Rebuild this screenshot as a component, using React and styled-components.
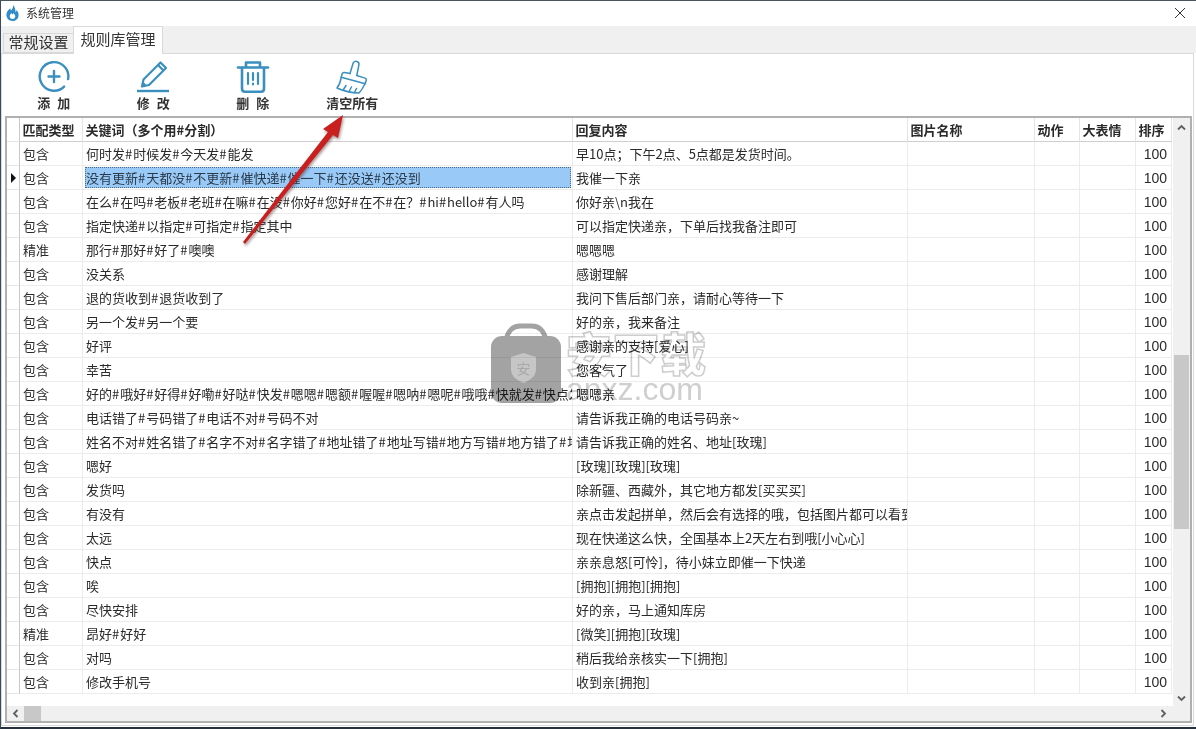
import React from "react";
import styled, { createGlobalStyle } from "styled-components";

const COLUMNS = "13px 63px 490px 335px 127px 45px 56px 36px";
const ICON_BLUE = "#3a8fbf";

const rows = [
  ["包含", "何时发#时候发#今天发#能发", "早10点；下午2点、5点都是发货时间。"],
  ["包含", "没有更新#天都没#不更新#催快递#催一下#还没送#还没到", "我催一下亲"],
  ["包含", "在么#在吗#老板#老班#在嘛#在没#你好#您好#在不#在？#hi#hello#有人吗", "你好亲\\n我在"],
  ["包含", "指定快递#以指定#可指定#指定其中", "可以指定快递亲，下单后找我备注即可"],
  ["精准", "那行#那好#好了#噢噢", "嗯嗯嗯"],
  ["包含", "没关系", "感谢理解"],
  ["包含", "退的货收到#退货收到了", "我问下售后部门亲，请耐心等待一下"],
  ["包含", "另一个发#另一个要", "好的亲，我来备注"],
  ["包含", "好评", "感谢亲的支持[爱心]"],
  ["包含", "幸苦", "您客气了"],
  ["包含", "好的#哦好#好得#好嘞#好哒#快发#嗯嗯#嗯额#喔喔#嗯呐#嗯呢#哦哦#快就发#快点发#快点发货", "嗯嗯亲"],
  ["包含", "电话错了#号码错了#电话不对#号码不对", "请告诉我正确的电话号码亲~"],
  ["包含", "姓名不对#姓名错了#名字不对#名字错了#地址错了#地址写错#地方写错#地方错了#地址不对", "请告诉我正确的姓名、地址[玫瑰]"],
  ["包含", "嗯好", "[玫瑰][玫瑰][玫瑰]"],
  ["包含", "发货吗", "除新疆、西藏外，其它地方都发[买买买]"],
  ["包含", "有没有", "亲点击发起拼单，然后会有选择的哦，包括图片都可以看到"],
  ["包含", "太远", "现在快递这么快，全国基本上2天左右到哦[小心心]"],
  ["包含", "快点", "亲亲息怒[可怜]，待小妹立即催一下快递"],
  ["包含", "唉", "[拥抱][拥抱][拥抱]"],
  ["包含", "尽快安排", "好的亲，马上通知库房"],
  ["精准", "昂好#好好", "[微笑][拥抱][玫瑰]"],
  ["包含", "对吗", "稍后我给亲核实一下[拥抱]"],
  ["包含", "修改手机号", "收到亲[拥抱]"],
];

const headers = ["匹配类型", "关键词（多个用#分割）", "回复内容", "图片名称", "动作", "大表情", "排序"];

const GlobalStyle = createGlobalStyle`
  html, body {
    margin: 0;
    padding: 0;
    background: #fff;
  }
  * {
    box-sizing: border-box;
  }
`;

const Frame = styled.div`
  position: relative;
  width: 1196px;
  height: 729px;
  display: flex;
  flex-direction: column;
  overflow: hidden;
  background: #fff;
  border-top: 1px solid #4a5560;
  border-left: 1px solid #3c4a5a;
  border-bottom: 2px solid #26303c;
  font-family: "Noto Sans CJK SC", "Liberation Sans", sans-serif;
  color: #2a2a2a;
`;

const TitleBar = styled.div`
  height: 25px;
  flex: none;
  display: flex;
  align-items: center;
  padding: 0 10px 2px 5px;
  gap: 7px;
  font-size: 12px;
  color: #333;
`;

const TitleText = styled.span`
  flex: 1;
`;

const CloseIcon = styled.svg`
  width: 10px;
  height: 10px;
  margin-right: 1px;
`;

const TabStrip = styled.div`
  height: 27px;
  flex: none;
  display: flex;
  align-items: flex-end;
  padding-left: 2px;
  background: #f0f0f0;
`;

const Tab = styled.div`
  height: ${(p) => (p.$active ? "28px" : "20px")};
  width: ${(p) => (p.$active ? "90px" : "70px")};
  margin-bottom: ${(p) => (p.$active ? "-1px" : "0")};
  padding-bottom: ${(p) => (p.$active ? "5px" : "4px")};
  position: relative;
  display: flex;
  align-items: center;
  justify-content: center;
  font-size: 15px;
  color: #333;
  background: ${(p) => (p.$active ? "#fff" : "#f0f0f0")};
  border: 1px solid #d9d9d9;
  border-bottom: ${(p) => (p.$active ? "none" : "1px solid #d9d9d9")};
  border-right: ${(p) => (p.$active ? "1px solid #d9d9d9" : "none")};
`;

const Panel = styled.div`
  flex: 1;
  min-height: 0;
  display: flex;
  flex-direction: column;
  margin: 0 2px 1px 0;
  padding: 0 1px 2px 3px;
  background: #fff;
  border: 1px solid #d9d9d9;
`;

const Toolbar = styled.div`
  height: 62px;
  flex: none;
  display: flex;
  margin-left: -1px;
`;

const ToolButton = styled.div`
  width: 99.5px;
  display: flex;
  flex-direction: column;
  align-items: center;
  padding-top: 6px;
`;

const ToolIcon = styled.svg`
  width: 34px;
  height: 34px;
  display: block;
  fill: none;
  stroke: ${ICON_BLUE};
`;

const ToolLabel = styled.span`
  margin-top: 1px;
  font-size: 13px;
  line-height: 17px;
  font-weight: 700;
  white-space: pre;
  color: #333;
  font-family: "Liberation Sans", "Noto Sans CJK SC", sans-serif;
`;

const Table = styled.div`
  flex: 1;
  min-height: 0;
  display: flex;
  flex-direction: column;
  border: 2px solid #b0b0b0;
`;

const TableBody = styled.div`
  flex: 1;
  min-height: 0;
  display: flex;
`;

const GridArea = styled.div`
  flex: 1;
  min-width: 0;
`;

const Row = styled.div`
  display: grid;
  grid-template-columns: ${COLUMNS};
  height: 24px;
`;

const HeaderCell = styled.div`
  display: flex;
  align-items: center;
  padding: 0 0 1px 2.5px;
  font-size: 13px;
  font-weight: 700;
  white-space: nowrap;
  overflow: hidden;
  background: #fff;
  border-right: 1px solid #e4e4e4;
  border-bottom: 1px solid #cfcfcf;
`;

const RowHead = styled.div`
  display: flex;
  align-items: center;
  justify-content: center;
  background: #fff;
  border-right: 1px solid #c8c8c8;
  border-bottom: 1px solid #e6e6e6;
`;

const Marker = styled.span`
  width: 0;
  height: 0;
  margin-left: 1px;
  border-top: 5px solid transparent;
  border-bottom: 5px solid transparent;
  border-left: 5px solid #111;
`;

const Cell = styled.div`
  display: flex;
  align-items: center;
  justify-content: ${(p) => (p.$number ? "flex-end" : "flex-start")};
  padding: ${(p) => (p.$number ? "0 4px 0 0" : "0 0 0 3px")};
  font-size: ${(p) => (p.$number ? "14px" : "13px")};
  font-family: ${(p) =>
    p.$number ? '"Liberation Sans", sans-serif' : '"Noto Sans CJK SC", "Liberation Sans", sans-serif'};
  white-space: nowrap;
  overflow: hidden;
  border-right: 1px solid #ececec;
  border-bottom: 1px solid #ececec;
`;

const KeywordLine = styled.span`
  display: block;
`;

// the # in the original font is a little wider than in Noto
const Hash = styled.span`
  letter-spacing: 0.9px;
`;

const SelectedText = styled.span`
  flex: 1;
  align-self: stretch;
  display: flex;
  align-items: center;
  margin: 1px 1px 1px -1px;
  padding-left: 1px;
  background: #99c9f7;
  outline: 1px dotted #4a6a8a;
  outline-offset: -1px;
  color: #2b3a48;
`;

const VScroll = styled.div`
  width: 18px;
  flex: none;
  display: flex;
  flex-direction: column;
  align-items: center;
  background: #f0f0f0;
  border-left: 1px solid #fff;
`;

const ScrollArrow = styled.svg`
  width: 9px;
  height: 9px;
  flex: none;
  fill: none;
  stroke: #606060;
  stroke-width: 1.8;
`;

const VTrack = styled.div`
  flex: 1;
  width: 100%;
  padding: 223px 1px 0;
`;

const VThumb = styled.div`
  height: 174px;
  background: #c8c8c8;
`;

const HScroll = styled.div`
  height: 15px;
  flex: none;
  display: flex;
  align-items: center;
  padding: 0 4px;
  background: #f0f0f0;
`;

const HThumb = styled.div`
  width: 17px;
  height: 15px;
  margin-left: 4px;
  margin-right: auto;
  background: #c8c8c8;
`;

const ArrowOverlay = styled.svg`
  position: absolute;
  left: 234px;
  top: 99px;
  width: 125px;
  height: 155px;
  pointer-events: none;
  filter: drop-shadow(1px 2px 1.5px rgba(90, 60, 60, 0.55));
`;

const Watermark = styled.div`
  position: absolute;
  left: 489px;
  top: 321px;
  display: flex;
  gap: 4px;
  pointer-events: none;
  mix-blend-mode: multiply;
`;

const WatermarkBag = styled.svg`
  width: 72px;
  height: 85px;
  flex: none;
`;

const WatermarkText = styled.div`
  display: flex;
  flex-direction: column;
`;

const WatermarkName = styled.span`
  margin-top: 3px;
  font-size: 46px;
  line-height: 52px;
  font-weight: 900;
  letter-spacing: 1px;
  color: #fff;
  -webkit-text-stroke: 1.5px #cdcdcd;
`;

const WatermarkSite = styled.span`
  margin-top: -3px;
  font-family: "Liberation Sans", sans-serif;
  font-size: 32px;
  line-height: 30px;
  color: #cfcfcf;
`;

const Flame = () => (
  <svg width="13" height="16" viewBox="0 0 13 16" style={{ flex: "none" }}>
    <path
      fill="#2f8bc9"
      fillRule="evenodd"
      d="M7 0c.6 2.6-.6 3.900-2 5.400C4.600 4.700 4.300 4.100 4.200 3.300 2 5 .4 7.300.4 9.800.4 13.300 3 16 6.500 16s6.100-2.700 6.100-6.100c0-2.200-1.100-3.700-2.200-4.900.1 1-.2 1.700-.8 2.300C9.400 4.400 8.900 1.900 7 0zM6.500 14c-1.600 0-2.800-1.200-2.800-2.700 0-1.300.9-2.200 1.800-3.300.2 1 .8 1.400 1.400 1.500.2-.6.200-1.100.1-1.600 1.300.9 2.300 2 2.300 3.400C9.300 12.800 8.100 14 6.500 14z"
    />
  </svg>
);

const AddIcon = () => (
  <ToolIcon viewBox="0 0 34 34" strokeWidth="2.400" strokeLinecap="round">
    <path d="M27.100 26.600A14.300 14.300 0 1 1 31.100 19" />
    <path d="M17 11v11M11.500 16.500h11" />
  </ToolIcon>
);

const EditIcon = () => (
  <ToolIcon viewBox="0 0 34 34" strokeWidth="2.200" strokeLinejoin="round">
    <path d="M7.500 19.500 24.500 2.500l5.500 5.500-17 17-7 1.500z" />
    <path d="M22 5l5.500 5.500" />
    <path d="M5.500 26.500l1.500-5 3.500 3.500z" fill={ICON_BLUE} stroke="none" />
    <path d="M1 31h32" strokeWidth="2.400" />
  </ToolIcon>
);

const DeleteIcon = () => (
  <ToolIcon viewBox="0 0 34 34" strokeWidth="2.600" strokeLinecap="round" strokeLinejoin="round">
    <path d="M2 7.500h30" />
    <path d="M10 6.500V2.500h14v4" />
    <path d="M6 8v20.500c0 2 1.200 3.200 3 3.200h16c1.800 0 3-1.200 3-3.200V8" />
    <path d="M12 13v11M22 13v11M17 13v7M17 23.500v1" strokeWidth="2.200" />
  </ToolIcon>
);

const BrushIcon = () => (
  <ToolIcon viewBox="0 0 34 34" strokeWidth="1.500" strokeLinejoin="round" strokeLinecap="round">
    <path d="M15 13.500 18 3.500c.5-1.800 2.200-2.500 3.800-2s2.500 2.200 2 3.800L21.800 15.500" />
    <path d="M15 13.500 9.500 12.500c-1.200-.2-2 .3-2.300 1.300l-1 3.500 24 6.500 1-3.500c.3-1-.2-1.900-1.200-2.200L21.800 15.500" />
    <path d="M6.200 17.300C5.500 22 4 25.500 2 28c6.500 3 14 4.800 22 5 2.500-2.500 4.500-6 6.200-9.700" />
    <path d="M8.500 29.500l2.500-4M14 31.500l2.500-4.500M19.500 32.500l2-4" />
  </ToolIcon>
);

const Keywords = ({ text }) => (
  <KeywordLine>
    {text.split("#").map((part, i) => (
      <React.Fragment key={i}>
        {i > 0 && <Hash>#</Hash>}
        {part}
      </React.Fragment>
    ))}
  </KeywordLine>
);

const App = () => {
  return (
    <Frame>
      <GlobalStyle />
      <TitleBar>
        <Flame />
        <TitleText>系统管理</TitleText>
        <CloseIcon viewBox="0 0 10 10" fill="none" stroke="#333" strokeWidth="1">
          <path d="M0 0l10 10M10 0L0 10" />
        </CloseIcon>
      </TitleBar>
      <TabStrip>
        <Tab>常规设置</Tab>
        <Tab $active>规则库管理</Tab>
      </TabStrip>
      <Panel>
        <Toolbar>
          <ToolButton>
            <AddIcon />
            <ToolLabel>添  加</ToolLabel>
          </ToolButton>
          <ToolButton>
            <EditIcon />
            <ToolLabel>修  改</ToolLabel>
          </ToolButton>
          <ToolButton>
            <DeleteIcon />
            <ToolLabel>删  除</ToolLabel>
          </ToolButton>
          <ToolButton>
            <BrushIcon />
            <ToolLabel>清空所有</ToolLabel>
          </ToolButton>
        </Toolbar>
        <Table>
          <TableBody>
            <GridArea>
              <Row>
                <RowHead />
                {headers.map((title) => (
                  <HeaderCell key={title}>{title}</HeaderCell>
                ))}
              </Row>
              {rows.map(([type, keywords, reply], i) => (
                <Row key={keywords}>
                  <RowHead>{i === 1 && <Marker />}</RowHead>
                  <Cell>{type}</Cell>
                  <Cell>
                    {i === 1 ? (
                      <SelectedText>
                        <Keywords text={keywords} />
                      </SelectedText>
                    ) : (
                      <Keywords text={keywords} />
                    )}
                  </Cell>
                  <Cell>{reply}</Cell>
                  <Cell />
                  <Cell />
                  <Cell />
                  <Cell $number>100</Cell>
                </Row>
              ))}
            </GridArea>
            <VScroll>
              <ScrollArrow viewBox="0 0 9 9" style={{ marginTop: 5 }}>
                <path d="M1 6.500l3.500-3.500L8 6.500" />
              </ScrollArrow>
              <VTrack>
                <VThumb />
              </VTrack>
              <ScrollArrow viewBox="0 0 9 9" style={{ marginBottom: 3 }}>
                <path d="M1 2.500L4.500 6 8 2.500" />
              </ScrollArrow>
            </VScroll>
          </TableBody>
          <HScroll>
            <ScrollArrow viewBox="0 0 9 9">
              <path d="M6.500 1L3 4.500 6.500 8" />
            </ScrollArrow>
            <HThumb />
            <ScrollArrow viewBox="0 0 9 9" style={{ marginRight: 18 }}>
              <path d="M2.500 1L6 4.500 2.500 8" />
            </ScrollArrow>
          </HScroll>
        </Table>
      </Panel>
      <Watermark>
        <WatermarkBag viewBox="0 0 72 85">
          <path fill="none" stroke="#a3a3a3" strokeWidth="5" d="M16 20C17 8 24 4 30 4h12c6 0 13 4 14 16" />
          <rect x="1" y="14" width="70" height="67" rx="11" fill="#a3a3a3" />
          <path fill="#c6c6c6" d="M33.500 31l12.500 4v12c0 7-5 11-12.500 14C26 58 21 54 21 47V35z" />
          <text x="33.500" y="52" textAnchor="middle" fontSize="14" fontFamily="Noto Sans CJK SC" fill="#a8a8a8">
            安
          </text>
        </WatermarkBag>
        <WatermarkText>
          <WatermarkName>安下载</WatermarkName>
          <WatermarkSite>anxz.com</WatermarkSite>
        </WatermarkText>
      </Watermark>
      <ArrowOverlay viewBox="0 0 125 155">
        <polygon fill="#c9201f" points="8,142 93,32 88,29 108,15 103,38 98,35 10,144" />
      </ArrowOverlay>
    </Frame>
  );
};

export default App;
